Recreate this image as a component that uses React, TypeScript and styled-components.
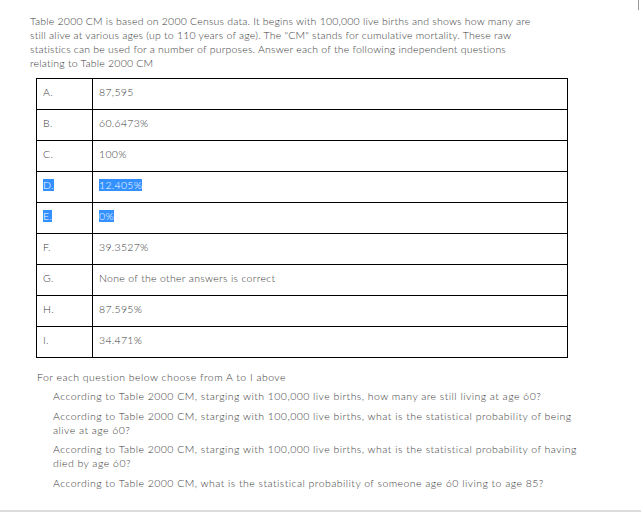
import React from "react";
import styled, { createGlobalStyle } from "styled-components";

const GlobalStyle = createGlobalStyle`
  body {
    margin: 0;
    background: #fff;
    font-family: Lato, "Open Sans", sans-serif;
    color: #3a3a3a;
  }
`;

const introLines = [
  "Table 2000 CM is based on 2000 Census data. It begins with 100,000 live births and shows how many are",
  'still alive at various ages (up to 110 years of age). The "CM" stands for cumulative mortality. These raw',
  "statistics can be used for a number of purposes. Answer each of the following independent questions",
  "relating to Table 2000 CM",
];

const rows: { label: string; value: string; picked?: boolean }[] = [
  { label: "A.", value: "87,595" },
  { label: "B.", value: "60.6473%" },
  { label: "C.", value: "100%" },
  { label: "D.", value: "12.405%", picked: true },
  { label: "E.", value: "0%", picked: true },
  { label: "F.", value: "39.3527%" },
  { label: "G.", value: "None of the other answers is correct" },
  { label: "H.", value: "87.595%" },
  { label: "I.", value: "34.471%" },
];

const questions = [
  "According to Table 2000 CM, starging with 100,000 live births, how many are still living at age 60?",
  "According to Table 2000 CM, starging with 100,000 live births, what is the statistical probability of being alive at age 60?",
  "According to Table 2000 CM, starging with 100,000 live births, what is the statistical probability of having died by age 60?",
  "According to Table 2000 CM, what is the statistical probability of someone age 60 living to age 85?",
];

const App: React.FC = () => {
  return (
    <>
      <GlobalStyle />
      <Page>
        <ScrollEdge />
        <Intro>
          {introLines.map((line, i) => (
            <React.Fragment key={`l-${i}`}>
              {line}
              {i < introLines.length - 1 && <br />}
            </React.Fragment>
          ))}
        </Intro>
        <AnswerTable>
          <tbody>
            {rows.map((row) => (
              <tr key={row.label}>
                <LabelCell>
                  <Mark $picked={row.picked}>{row.label}</Mark>
                </LabelCell>
                <ValueCell>
                  <Mark $picked={row.picked}>{row.value}</Mark>
                </ValueCell>
              </tr>
            ))}
          </tbody>
        </AnswerTable>
        <Instruction>For each question below choose from A to I above</Instruction>
        <QuestionList>
          {questions.map((q, i) => (
            <Question key={`q-${i}`}>{q}</Question>
          ))}
        </QuestionList>
      </Page>
    </>
  );
};

const Page = styled.div`
  position: relative;
  box-sizing: border-box;
  width: 641px;
  height: 512px;
  border-bottom: 2px solid #dcdcdc;
  padding-top: 14px;
  font-size: 10.5px;
  font-weight: 300;
  letter-spacing: 0.45px;
  line-height: 14px;
`;

// thin grey tick at the top-right corner of the frame
const ScrollEdge = styled.div`
  position: absolute;
  top: 0;
  right: 2px;
  width: 1px;
  height: 10px;
  background: #999;
`;

const Intro = styled.p`
  margin: 0 0 8px 30px;
  width: 580px;
  letter-spacing: 0.2px;
`;

const AnswerTable = styled.table`
  margin-left: 36px;
  width: 532px;
  border-collapse: collapse;
  letter-spacing: 0.3px;
`;

const Cell = styled.td`
  border: 1px solid #000;
  height: 31px;
  padding: 6px 6px 0;
  vertical-align: top;
  box-sizing: border-box;
`;

const LabelCell = styled(Cell)`
  width: 56px;
`;

const ValueCell = styled(Cell)``;

const Mark = styled.span<{ $picked?: boolean }>`
  ${(props) =>
    props.$picked &&
    `
    background: #3390ff;
    color: #fff;
  `}
`;

const Instruction = styled.div`
  margin: 12px 0 0 37px;
`;

const QuestionList = styled.div`
  margin: 5px 0 0 53px;
  width: 532px;
  display: flex;
  flex-direction: column;
  gap: 5.5px;
`;

const Question = styled.div``;

export default App;
